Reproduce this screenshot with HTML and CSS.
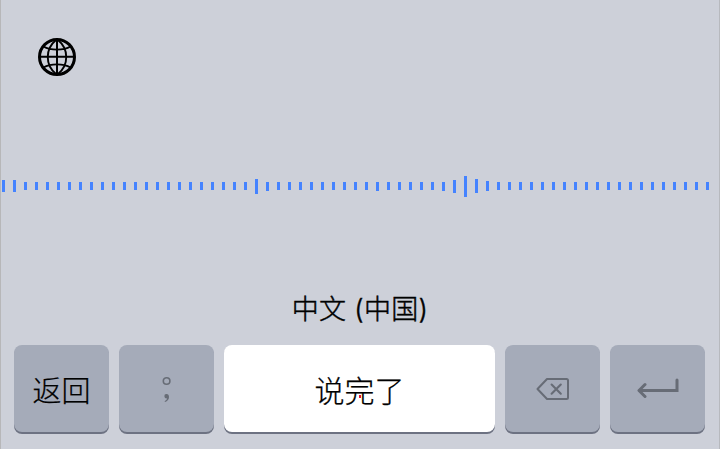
FILE: index.html
```html
<!DOCTYPE html>
<html lang="zh-CN">
<head>
<meta charset="utf-8">
<title>听写键盘</title>
<link rel="stylesheet" href="styles.css">
</head>
<body>
<main class="keyboard">
  <header class="top">
    <svg class="globe" viewBox="0 0 38 38" fill="none" stroke="#000">
      <circle cx="19" cy="19" r="17.5" stroke-width="3"/>
      <path stroke-width="2" d="M19 1v36M1 18.7h36"/>
      <path stroke-width="1.9" d="M18 2C7 11 7 27 18 36M20 2c11 9 11 25 0 34M5.5 8.5c7 4.2 20 4.2 27 0M5.5 29.5c7-4.2 20-4.2 27 0"/>
    </svg>
  </header>
  <div class="wave" id="wave"></div>
  <div class="language">中文 (中国)</div>
  <div class="keys">
    <div class="key back">返回</div>
    <div class="key">
      <svg class="punct" viewBox="0 0 12 28"><circle cx="5.6" cy="6" r="3.3" fill="none" stroke="#676c76" stroke-width="1.6"/><path fill="#676c76" d="M3.4 21a2 2 0 0 1 2.2-2.1c1.5 0 2.4 1.1 2.4 3 0 2.4-1.4 4.2-4 5.2l-.4-.9c1.5-.7 2.3-1.6 2.4-2.9-.2.1-.5.1-.7.1-1.1 0-1.9-1-1.9-2.4z"/></svg>
    </div>
    <div class="key done">说完了</div>
    <div class="key">
      <svg class="delete" viewBox="0 0 34 24" fill="none" stroke="#676c76" stroke-linejoin="round" stroke-linecap="round"><path stroke-width="2" d="M11 2h19.5q1.5 0 1.5 1.5v17q0 1.5-1.5 1.5H11L1.5 12z"/><path stroke-width="2.1" d="M15.6 7.5l9.2 9.2M24.8 7.5l-9.2 9.2"/></svg>
    </div>
    <div class="key">
      <svg class="enter" viewBox="0 0 42 22" fill="none" stroke="#676c76" stroke-width="3" stroke-linecap="round" stroke-linejoin="round"><path stroke-linejoin="miter" d="M3 12.5h37V2"/><path d="M8 6.5l-6 6 6 6"/></svg>
    </div>
  </div>
</main>
<script src="wave.js"></script>
</body>
</html>
```
FILE: styles.css
```css
* {
  box-sizing: border-box;
}

body {
  margin: 0;
  font-family: "Noto Sans CJK SC", sans-serif;
  color: #000;
}

.keyboard {
  display: flex;
  flex-direction: column;
  width: 720px;
  height: 449px;
  overflow: hidden;
  background: #cdd0d9;
  border-left: 1px solid #b7b7b9;
  border-right: 1px solid #b7b9be;
}

.top {
  height: 176px;
  padding: 38px 0 0 37px;
}

.globe {
  display: block;
  width: 38px;
  height: 38px;
}

.wave {
  display: flex;
  align-items: flex-start;
  gap: 8px;
  height: 21px;
  padding-left: 1px;
}

.bar {
  flex: none;
  width: 3px;
  background: #4583ff;
}

.language {
  height: 40px;
  margin-top: 93px;
  font-family: Inter, "Noto Sans CJK SC", sans-serif;
  font-size: 27px;
  font-weight: 300;
  -webkit-text-stroke: 0.45px #000;
  letter-spacing: 0.3px;
  line-height: 40px;
  text-align: center;
}

.keys {
  display: grid;
  grid-template-columns: 95px 95px 271px 95px 95px;
  gap: 10px;
  margin-top: 15px;
  padding-left: 13px;
}

.key {
  display: flex;
  align-items: center;
  justify-content: center;
  height: 87px;
  border-radius: 8px;
  background: #a5abb9;
  box-shadow: 0 2px 0 #6d7282;
  font-size: 29px;
  font-weight: 300;
  -webkit-text-stroke: 0.25px #000;
  line-height: 40px;
}

.done {
  position: relative;
  background: #fff;
  font-size: 30px;
}

/* small red marker over the label */
.done::after {
  content: "";
  position: absolute;
  top: 50px;
  left: 135px;
  width: 2px;
  height: 3px;
  background: #e8102c;
}

.punct {
  width: 12px;
  height: 28px;
}

.delete {
  width: 34px;
  height: 24px;
}

.enter {
  width: 42px;
  height: 22px;
}
```
FILE: wave.js
```js
// Bars that differ from the idle level: index -> [top, height]
const peaks = {
  0: [4, 12], 1: [4, 12], 23: [3, 15], 24: [6, 9], 34: [6, 9], 40: [6, 9],
  41: [4, 13], 42: [0, 21], 43: [3, 14], 44: [5, 10]
};
const wave = document.getElementById("wave");
for (let i = 0; i < 65; i++) {
  const [top, height] = peaks[i] || [6, 8];
  const bar = document.createElement("span");
  bar.className = "bar";
  bar.style.marginTop = top + "px";
  bar.style.height = height + "px";
  wave.appendChild(bar);
}
```
